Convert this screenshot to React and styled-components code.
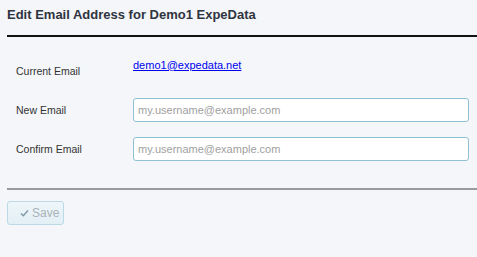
import React from 'react'
import styled, { createGlobalStyle } from 'styled-components'

const GlobalStyle = createGlobalStyle`
    html, body {
        margin: 0;
        padding: 0;
        background: #f4f6f9;
    }
    body {
        font-family: "Liberation Sans", Arial, sans-serif;
        color: #333;
    }
`

const Page = styled.div`
    width: 477px;
    height: 257px;
    padding-left: 7px;
    box-sizing: border-box;
    background: #f4f6f9;
`

const Title = styled.h2`
    margin: 0;
    padding-top: 7px;
    height: 37px;
    box-sizing: border-box;
    font-size: 13px;
    font-weight: bold;
    color: #2f3440;
    border-bottom: 2px solid #111;
`

const Form = styled.div`
    display: flex;
    flex-direction: column;
    padding: 21px 0 0 9px;
    height: 153px;
    box-sizing: border-box;
    border-bottom: 2px solid #9a9a9a;
`

const Row = styled.div`
    display: grid;
    grid-template-columns: 117px 336px;
    align-items: center;
    height: ${p => p.h}px;
`

const Label = styled.label`
    font-size: 10.5px;
    color: #333;
    align-self: ${p => (p.top ? 'start' : 'center')};
    padding-top: ${p => (p.top ? '7px' : '0')};
`

const Link = styled.a`
    font-size: 11px;
    color: #0000ee;
    text-decoration: underline;
    align-self: start;
    padding-top: 1px;
`

const Input = styled.input`
    width: 336px;
    height: 24px;
    box-sizing: border-box;
    border: 1px solid #8fc0d4;
    border-radius: 3px;
    background: #fff;
    padding: 0 4px;
    font-family: "Liberation Sans", Arial, sans-serif;
    font-size: 11px;
    color: #333;
    outline: none;

    &::placeholder {
        color: #a0a0a0;
    }
`

const Footer = styled.div`
    padding-top: 11px;
`

const SaveButton = styled.button`
    display: flex;
    align-items: center;
    gap: 3px;
    width: 57px;
    height: 24px;
    box-sizing: border-box;
    padding: 0 0 0 12px;
    border: 1px solid #bcd9e6;
    border-radius: 3px;
    background: linear-gradient(#eef6fa, #e2eff5);
    font-family: "Liberation Sans", Arial, sans-serif;
    font-size: 12px;
    color: #a9b3b8;
    cursor: default;
`

function Check() {
    return (
        <svg width="9" height="8" viewBox="0 0 9 8">
            <path d="M1 4.5 L3.3 6.8 L8 1.5" fill="none" stroke="#7f98a6" strokeWidth="1.4" />
        </svg>
    )
}

export default function App() {
    return (
        <Page>
            <GlobalStyle />
            <Title>Edit Email Address for Demo1 ExpeData</Title>
            <Form>
                <Row h={32}>
                    <Label top>Current Email</Label>
                    <Link href="#">demo1@expedata.net</Link>
                </Row>
                <Row h={39}>
                    <Label>New Email</Label>
                    <Input placeholder="my.username@example.com" />
                </Row>
                <Row h={39}>
                    <Label>Confirm Email</Label>
                    <Input placeholder="my.username@example.com" />
                </Row>
            </Form>
            <Footer>
                <SaveButton disabled><Check />Save</SaveButton>
            </Footer>
        </Page>
    )
}
